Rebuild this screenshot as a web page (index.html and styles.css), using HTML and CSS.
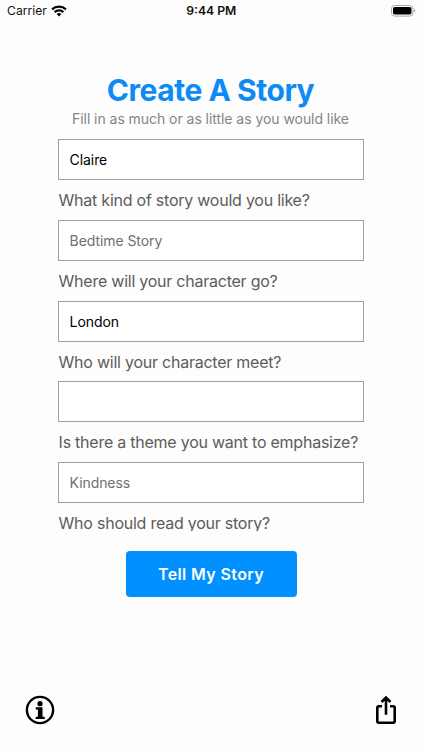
FILE: index.html
```html
<!DOCTYPE html>
<html lang="en">
<head>
<meta charset="utf-8">
<title>Create A Story</title>
<link rel="stylesheet" href="styles.css">
</head>
<body>
<div class="screen">
  <header class="status">
    <div class="carrier"><span>Carrier</span>
      <svg class="wifi" viewBox="0 0 16 12" aria-hidden="true">
        <path d="M1.1 4.4C4.9.8 11.1.8 14.9 4.4M3.6 7.1C6.1 4.7 9.9 4.7 12.4 7.1" fill="none" stroke="#000" stroke-width="2.2"/>
        <path d="M8 11.5 5.6 9C7 7.7 9 7.7 10.4 9Z"/>
      </svg>
    </div>
    <div class="clock">9:44 PM</div>
    <div class="power">
      <svg class="battery" viewBox="0 0 26 12" aria-hidden="true">
        <rect x=".5" y=".5" width="21.5" height="10.6" rx="3.2" fill="#fff" stroke="#a6a6a6"/>
        <rect x="2" y="2" width="18.5" height="7.6" rx="1.8"/>
        <path d="M23.3 4v3.6c1.5-.6 1.5-3 0-3.6Z" fill="#999"/>
      </svg>
    </div>
  </header>
  <main class="content">
    <h1 class="title">Create A Story</h1>
    <p class="subtitle">Fill in as much or as little as you would like</p>
    <form class="fields">
      <div class="box">Claire</div>
      <div class="label">What kind of story would you like?</div>
      <div class="box hint">Bedtime Story</div>
      <div class="label">Where will your character go?</div>
      <div class="box">London</div>
      <div class="label">Who will your character meet?</div>
      <div class="box"></div>
      <div class="label">Is there a theme you want to emphasize?</div>
      <div class="box hint">Kindness</div>
      <div class="label">Who should read your story?</div>
    </form>
    <button class="submit" type="button">Tell My Story</button>
  </main>
  <footer class="toolbar">
    <svg class="info" viewBox="0 0 30 30" aria-label="Info">
      <circle cx="15" cy="15" r="13.1" fill="none" stroke="#000" stroke-width="2.4"/>
      <circle cx="15" cy="8.7" r="2.6"/>
      <path d="M10.7 12.3h6.8v9.4h2.2v2.2h-9v-2.2h2.2v-7.2h-2.2Z"/>
    </svg>
    <svg class="share" viewBox="0 0 22 30" aria-label="Share">
      <path d="M7 11.2H3.9A1.6 1.6 0 0 0 2.3 12.8v13.3a1.6 1.6 0 0 0 1.6 1.6h14.2a1.6 1.6 0 0 0 1.6-1.6V12.8a1.6 1.6 0 0 0-1.6-1.6H15M11 19.7V2.7M6.5 7 11 2.5 15.500 7" fill="none" stroke="#000" stroke-width="2.6"/>
    </svg>
  </footer>
</div>
</body>
</html>
```
FILE: styles.css
```css
* { box-sizing: border-box; }
body { margin: 0; background: #fdfdfd; font-family: Inter, "Liberation Sans", sans-serif; }
.screen { width: 422px; height: 750px; display: flex; flex-direction: column; overflow: hidden; }
.status { height: 22px; flex: none; display: grid; grid-template-columns: 1fr auto 1fr; align-items: center; padding: 0 5px 0 7px; font-size: 12.2px; line-height: 22px; color: #111; }
.carrier { display: flex; align-items: center; gap: 3.6px; }
.wifi { width: 16px; height: 12px; }
.clock { font-weight: 600; margin-right: 1.5px; }
.power { display: flex; justify-content: flex-end; }
.battery { width: 26px; height: 12px; }
.content { flex: 1; display: flex; flex-direction: column; align-items: center; padding-top: 49px; }
.title { margin: 0 1px 0 0; height: 38px; line-height: 38px; font-size: 30px; font-weight: 700; letter-spacing: -.46px; color: #0e8af5; white-space: nowrap; }
.subtitle { margin: 0 1px 0 0; height: 20px; line-height: 20px; font-size: 14px; letter-spacing: -.05px; color: #858585; white-space: nowrap; }
.fields { width: 306px; height: 392px; margin: 10px 0 0; overflow: hidden; flex: none; }
.box { height: 41px; border: 1px solid #a0a0a0; background: #fff; padding-left: 10.6px; line-height: 39px; font-size: 14px; letter-spacing: -.08px; color: #000; }
.hint { color: #707070; }
.label { height: 39.75px; line-height: 40px; padding-left: .6px; font-size: 16px; letter-spacing: -.24px; color: #5c5c5c; white-space: nowrap; }
.submit { flex: none; margin: 20px 0 0; width: 171px; height: 46px; border: 0; border-radius: 4px; background: #0090ff; color: #fff; font: 600 16px/46px Inter, sans-serif; letter-spacing: .38px; padding: 0; }
.toolbar { flex: none; height: 55px; display: flex; justify-content: space-between; align-items: flex-start; padding: 0 25px; }
.info { width: 30px; height: 30px; }
.share { width: 22px; height: 30px; }
```
